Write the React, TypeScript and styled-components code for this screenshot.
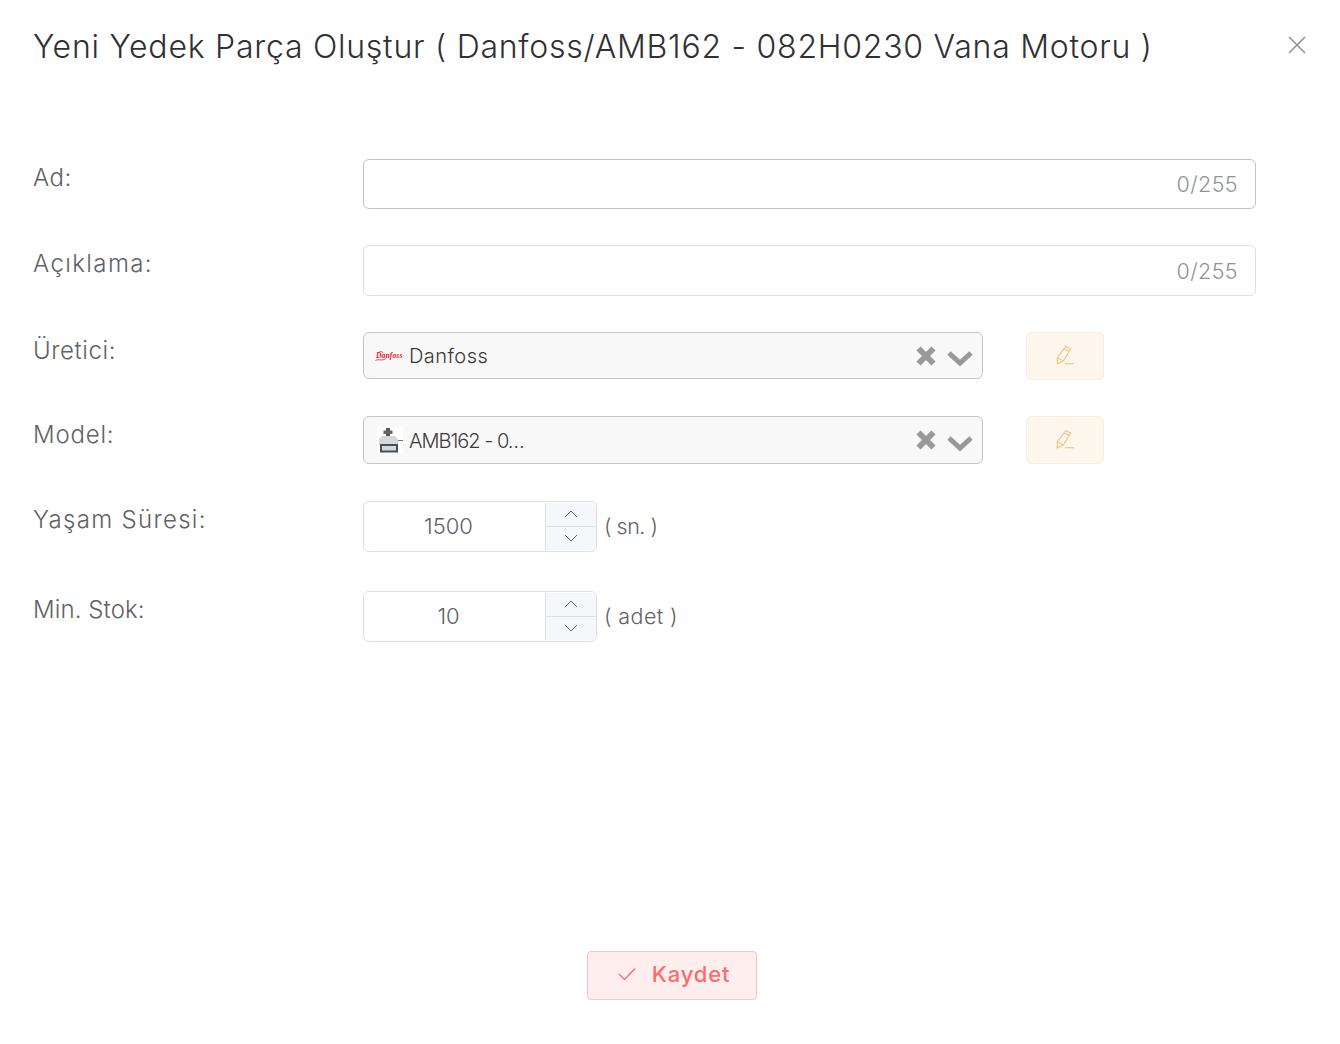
import React from "react";
import styled, { createGlobalStyle } from "styled-components";

const Global = createGlobalStyle`
  html, body { margin: 0; padding: 0; background: #fff; }
  body { font-family: "Inter", "Noto Sans", sans-serif; font-weight: 300; }
  * { box-sizing: border-box; }
`;

const Page = styled.div`
  width: 1340px;
  height: 1044px;
  padding: 0 0 0 33px;
  display: flex;
  flex-direction: column;
`;
const Header = styled.header`
  height: 159px;
  display: flex;
  align-items: flex-start;
  justify-content: space-between;
  padding: 25px 33px 0 0;
`;
const Title = styled.h1`
  margin: 0;
  font-size: 32px;
  line-height: 43px;
  font-weight: 300;
  color: #303133;
  letter-spacing: 0.75px;
  white-space: nowrap;
`;
const CloseButton = styled.button`
  border: 0;
  background: none;
  padding: 0;
  width: 20px;
  height: 20px;
  margin-top: 10px;
  color: #909399;
  display: flex;
`;
const Form = styled.form`
  margin: 0;
  display: flex;
  flex-direction: column;
`;
const Row = styled.div<{ $h: number; $gap: number }>`
  display: flex;
  align-items: flex-start;
  height: ${(p) => p.$h}px;
  margin-bottom: ${(p) => p.$gap}px;
`;
const Label = styled.label<{ $track: number }>`
  width: 330px;
  flex: none;
  font-size: 24px;
  line-height: 38px;
  color: #606266;
  letter-spacing: ${(p) => p.$track}px;
`;
const TextBox = styled.div<{ $strong?: boolean }>`
  width: 893px;
  height: 100%;
  border: 1px solid ${(p) => (p.$strong ? "#c0c4cc" : "#dcdfe6")};
  border-radius: 6px;
  display: flex;
  align-items: center;
  justify-content: flex-end;
  padding: 0 17px 0 14px;
`;
const Counter = styled.span`
  font-size: 21.5px;
  color: #909399;
  letter-spacing: 0.4px;
`;
const SelectBox = styled.div`
  width: 620px;
  height: 100%;
  background: #f8f8f8;
  border: 1px solid #c6c6c6;
  border-radius: 6px;
  display: flex;
  align-items: center;
  padding: 0 9px 0 11px;
  color: #3a3a3a;
`;
const OptionIcon = styled.span`
  width: 28px;
  height: 26px;
  flex: none;
  display: flex;
  align-items: center;
  justify-content: flex-end;
`;
const OptionLabel = styled.span<{ $track: number; $drop: number }>`
  margin: ${(p) => p.$drop}px 0 0 6px;
  flex: 1;
  font-size: 20px;
  letter-spacing: ${(p) => p.$track}px;
`;
const Actions = styled.span`
  display: flex;
  align-items: center;
  gap: 10px;
  color: #999;
`;
const EditButton = styled.button`
  width: 78px;
  height: 48px;
  margin-left: 43px;
  background: #fdf6ec;
  border: 1px solid #faecd8;
  border-radius: 5px;
  padding: 0;
  display: flex;
  align-items: center;
  justify-content: center;
  color: #f2c78a;
`;
const NumberBox = styled.div`
  width: 234px;
  height: 100%;
  border: 1px solid #dcdfe6;
  border-radius: 6px;
  display: flex;
  overflow: hidden;
`;
const NumberValue = styled.span`
  flex: 1;
  display: flex;
  align-items: center;
  justify-content: center;
  font-size: 22px;
  color: #606266;
  padding: 0 12px 2px 0;
`;
const Steppers = styled.div`
  width: 51px;
  flex: none;
  display: flex;
  flex-direction: column;
  background: #f5f7fa;
  border-left: 1px solid #dcdfe6;
  margin: 1px 0;
`;
const Step = styled.button`
  flex: 1;
  border: 0;
  background: none;
  padding: 0 0 1px;
  display: flex;
  align-items: center;
  justify-content: center;
  color: #606266;
  &:first-child { padding: 0; }
  & + & { border-top: 1px solid #dcdfe6; }
`;
const Unit = styled.span<{ $track: number }>`
  margin: 0 0 2px 7px;
  align-self: center;
  font-size: 21.5px;
  color: #606266;
  letter-spacing: ${(p) => p.$track}px;
`;
const Footer = styled.div`
  display: flex;
  justify-content: center;
  margin-top: 309px;
  padding-right: 29px;
`;
const SaveButton = styled.button`
  width: 170px;
  height: 49px;
  background: #ffeeee;
  border: 1px solid #ffc0c0;
  border-radius: 4px;
  display: flex;
  align-items: center;
  justify-content: center;
  gap: 16px;
  color: #fb6c6e;
  font-family: inherit;
  font-size: 22px;
  font-weight: 500;
  letter-spacing: 0.85px;
  padding: 0 0 3px 4px;
`;

const X = () => (
  <svg width="20" height="20" viewBox="0 0 20 20" fill="none" stroke="currentColor" strokeWidth="1.6">
    <path d="M2 2 L18 18 M18 2 L2 18" />
  </svg>
);
const ClearIcon = () => (
  <svg width="22" height="22" viewBox="0 0 22 22" fill="none" stroke="currentColor" strokeWidth="5.8">
    <path d="M3.5 3.5 L18.5 18.5 M18.5 3.5 L3.5 18.5" />
  </svg>
);
const ChevronIcon = () => (
  <svg width="26" height="18" viewBox="0 0 26 18" fill="none" stroke="currentColor" strokeWidth="5" style={{ marginTop: 5 }}>
    <path d="M2 4 L13 14 L24 4" />
  </svg>
);
const Pencil = () => (
  <svg width="20" height="20" viewBox="0 0 20 20" fill="none" stroke="currentColor" strokeWidth="1.2">
    <path d="M10.7 0.6 L15.7 3 L8.3 15 L2.3 17.7 L2.3 11.7 Z M2.3 11.7 L8.3 15 M9.3 3 L14.3 5.4" />
    <path d="M10 17.7 H19" />
  </svg>
);
const Up = () => (
  <svg width="14" height="8" viewBox="0 0 14 8" fill="none" stroke="currentColor" strokeWidth="1">
    <path d="M1 7 L7 1 L13 7" />
  </svg>
);
const Down = () => (
  <svg width="14" height="8" viewBox="0 0 14 8" fill="none" stroke="currentColor" strokeWidth="1">
    <path d="M1 1 L7 7 L13 1" />
  </svg>
);
const Check = () => (
  <svg width="18" height="14" viewBox="0 0 18 14" fill="none" stroke="currentColor" strokeWidth="1.4">
    <path d="M1 7 L6.5 12.5 L17 1.5" />
  </svg>
);
const DanfossLogo = () => (
  <svg width="28" height="16" viewBox="0 0 28 16">
    <text x="1" y="10" fontFamily="Liberation Serif, serif" fontStyle="italic" fontWeight="700" fontSize="7.6" fill="#e2202c" letterSpacing="0.1">Danfoss</text>
    <path d="M0.5 12.5 C4 10.5 7 13.5 11 10.5 M3 5 C5 3 7 3 8 5" stroke="#e2202c" strokeWidth="0.8" fill="none" />
  </svg>
);
const MotorImage = () => (
  <svg width="26" height="26" viewBox="0 0 26 26">
    <rect width="26" height="26" fill="#fff" />
    <rect x="9" y="1" width="4" height="9" fill="#555" />
    <rect x="6.5" y="3.5" width="9" height="3.5" fill="#666" />
    <path d="M5 9 h13 l3 3 v6 h-19 v-6 Z" fill="#d6d9dc" />
    <rect x="3" y="17" width="18" height="8.5" fill="#4b4f52" />
    <rect x="5" y="19" width="14" height="4.5" fill="#d3d8dc" />
    <path d="M21 13.5 h5" stroke="#777" strokeWidth="1" />
  </svg>
);

const Select = ({ icon, text, track, drop }: { icon: React.ReactNode; text: string; track: number; drop: number }) => (
  <>
    <SelectBox>
      <OptionIcon>{icon}</OptionIcon>
      <OptionLabel $track={track} $drop={drop}>{text}</OptionLabel>
      <Actions>
        <ClearIcon />
        <ChevronIcon />
      </Actions>
    </SelectBox>
    <EditButton type="button">
      <Pencil />
    </EditButton>
  </>
);

const NumberInput = ({ value, unit, track }: { value: string; unit: string; track: number }) => (
  <>
    <NumberBox>
      <NumberValue>{value}</NumberValue>
      <Steppers>
        <Step type="button"><Up /></Step>
        <Step type="button"><Down /></Step>
      </Steppers>
    </NumberBox>
    <Unit $track={track}>{unit}</Unit>
  </>
);

export default function App() {
  return (
    <Page>
      <Global />
      <Header>
        <Title>Yeni Yedek Parça Oluştur ( Danfoss/AMB162 - 082H0230 Vana Motoru )</Title>
        <CloseButton type="button" aria-label="Kapat"><X /></CloseButton>
      </Header>
      <Form>
        <Row $h={50} $gap={36}>
          <Label $track={0.5}>Ad:</Label>
          <TextBox $strong><Counter>0/255</Counter></TextBox>
        </Row>
        <Row $h={51} $gap={36}>
          <Label $track={1.4}>Açıklama:</Label>
          <TextBox><Counter>0/255</Counter></TextBox>
        </Row>
        <Row $h={47} $gap={37}>
          <Label $track={0.6}>Üretici:</Label>
          <Select icon={<DanfossLogo />} text="Danfoss" track={0.45} drop={0} />
        </Row>
        <Row $h={48} $gap={37}>
          <Label $track={0.8}>Model:</Label>
          <Select icon={<MotorImage />} text="AMB162 - 0…" track={-1} drop={2} />
        </Row>
        <Row $h={51} $gap={39}>
          <Label $track={1.3}>Yaşam Süresi:</Label>
          <NumberInput value="1500" unit="( sn. )" track={-0.5} />
        </Row>
        <Row $h={51} $gap={0}>
          <Label $track={0.1}>Min. Stok:</Label>
          <NumberInput value="10" unit="( adet )" track={0.4} />
        </Row>
      </Form>
      <Footer>
        <SaveButton type="button">
          <Check />
          Kaydet
        </SaveButton>
      </Footer>
    </Page>
  );
}
